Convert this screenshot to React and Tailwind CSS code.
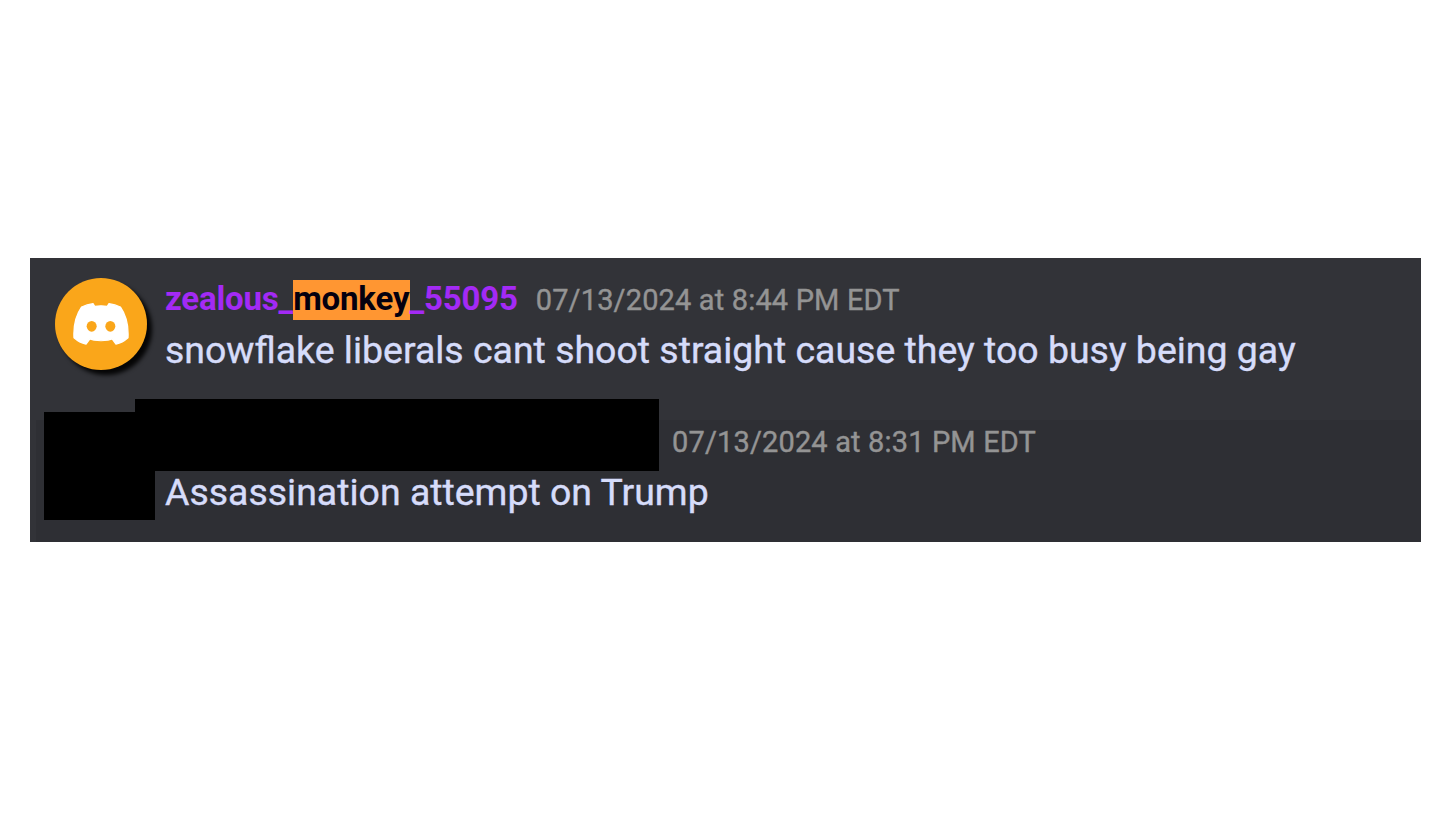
function DiscordLogo() {
  return (
    <svg viewBox="0 0 168 126" className="h-[42px] w-14" aria-hidden="true">
      <path
        d="M60 2C48 4 35 8 26 12C10 35 1 66 3 104C13 113 25 120 39 123L49 110L44 106C68 115 100 115 124 106L119 110L129 123C143 120 155 113 165 104C167 66 158 35 142 12C133 8 120 4 108 2L103 10C91 8 77 8 65 10Z"
        className="fill-white stroke-white stroke-[4px]"
        strokeLinejoin="round"
      />
      <ellipse cx="56" cy="70" rx="15" ry="16" className="fill-[#faa61a]" />
      <ellipse cx="112" cy="70" rx="15" ry="16" className="fill-[#faa61a]" />
    </svg>
  );
}

function Avatar() {
  return (
    <div className="grid h-[92px] w-[92px] shrink-0 place-items-center rounded-full bg-[#faa61a] shadow-[5px_5px_4px_rgba(0,0,0,0.9)]">
      <DiscordLogo />
    </div>
  );
}

function Timestamp({ children }) {
  return (
    <time className="whitespace-nowrap text-[29px] leading-10 tracking-[0.15px] text-[#949494] [-webkit-text-stroke:0.4px_#949494]">
      {children}
    </time>
  );
}

function MessageText({ children }) {
  return (
    <p className="whitespace-nowrap text-[37.45px] leading-[48px] text-[#d6dcfa] [-webkit-text-stroke:0.4px_#d6dcfa]">
      {children}
    </p>
  );
}

function Username() {
  return (
    <h3 className="whitespace-nowrap text-[33px] font-bold leading-[38px] tracking-[-0.17px] text-[#a32af5]">
      zealous_
      <mark className="-mr-px inline-block h-10 bg-[#ff9632] pr-px align-top text-[#05000f]">monkey</mark>
      _55095
    </h3>
  );
}

export default function App() {
  return (
    <main className="h-[819px] w-[1456px] overflow-hidden bg-white pl-[30px] pt-[258px] font-['Roboto',sans-serif]">
      <section className="h-[284px] w-[1391px] bg-[#323338]">
        <article className="flex h-[162px] gap-[18px] pl-[25px] pt-5">
          <Avatar />
          <div className="pt-[2px]">
            <header className="flex h-10 items-baseline gap-[18px]">
              <Username />
              <Timestamp>07/13/2024 at 8:44 PM EDT</Timestamp>
            </header>
            <div className="mt-[6px]">
              <MessageText>snowflake liberals cant shoot straight cause they too busy being gay</MessageText>
            </div>
          </div>
        </article>

        <article className="relative ml-[6px] h-[122px] bg-[#2e2f34]">
          {/* covered avatar and name */}
          <span className="absolute -top-2 left-2 h-[108px] w-[111px] bg-black" />
          <span className="absolute -top-[21px] left-[99px] h-[72px] w-[524px] bg-black" />
          <div className="pl-[129px] pt-[2px]">
            <header className="pl-[507px]">
              <Timestamp>07/13/2024 at 8:31 PM EDT</Timestamp>
            </header>
            <div className="mt-[6px]">
              <MessageText>Assassination attempt on Trump</MessageText>
            </div>
          </div>
        </article>
      </section>
    </main>
  );
}
